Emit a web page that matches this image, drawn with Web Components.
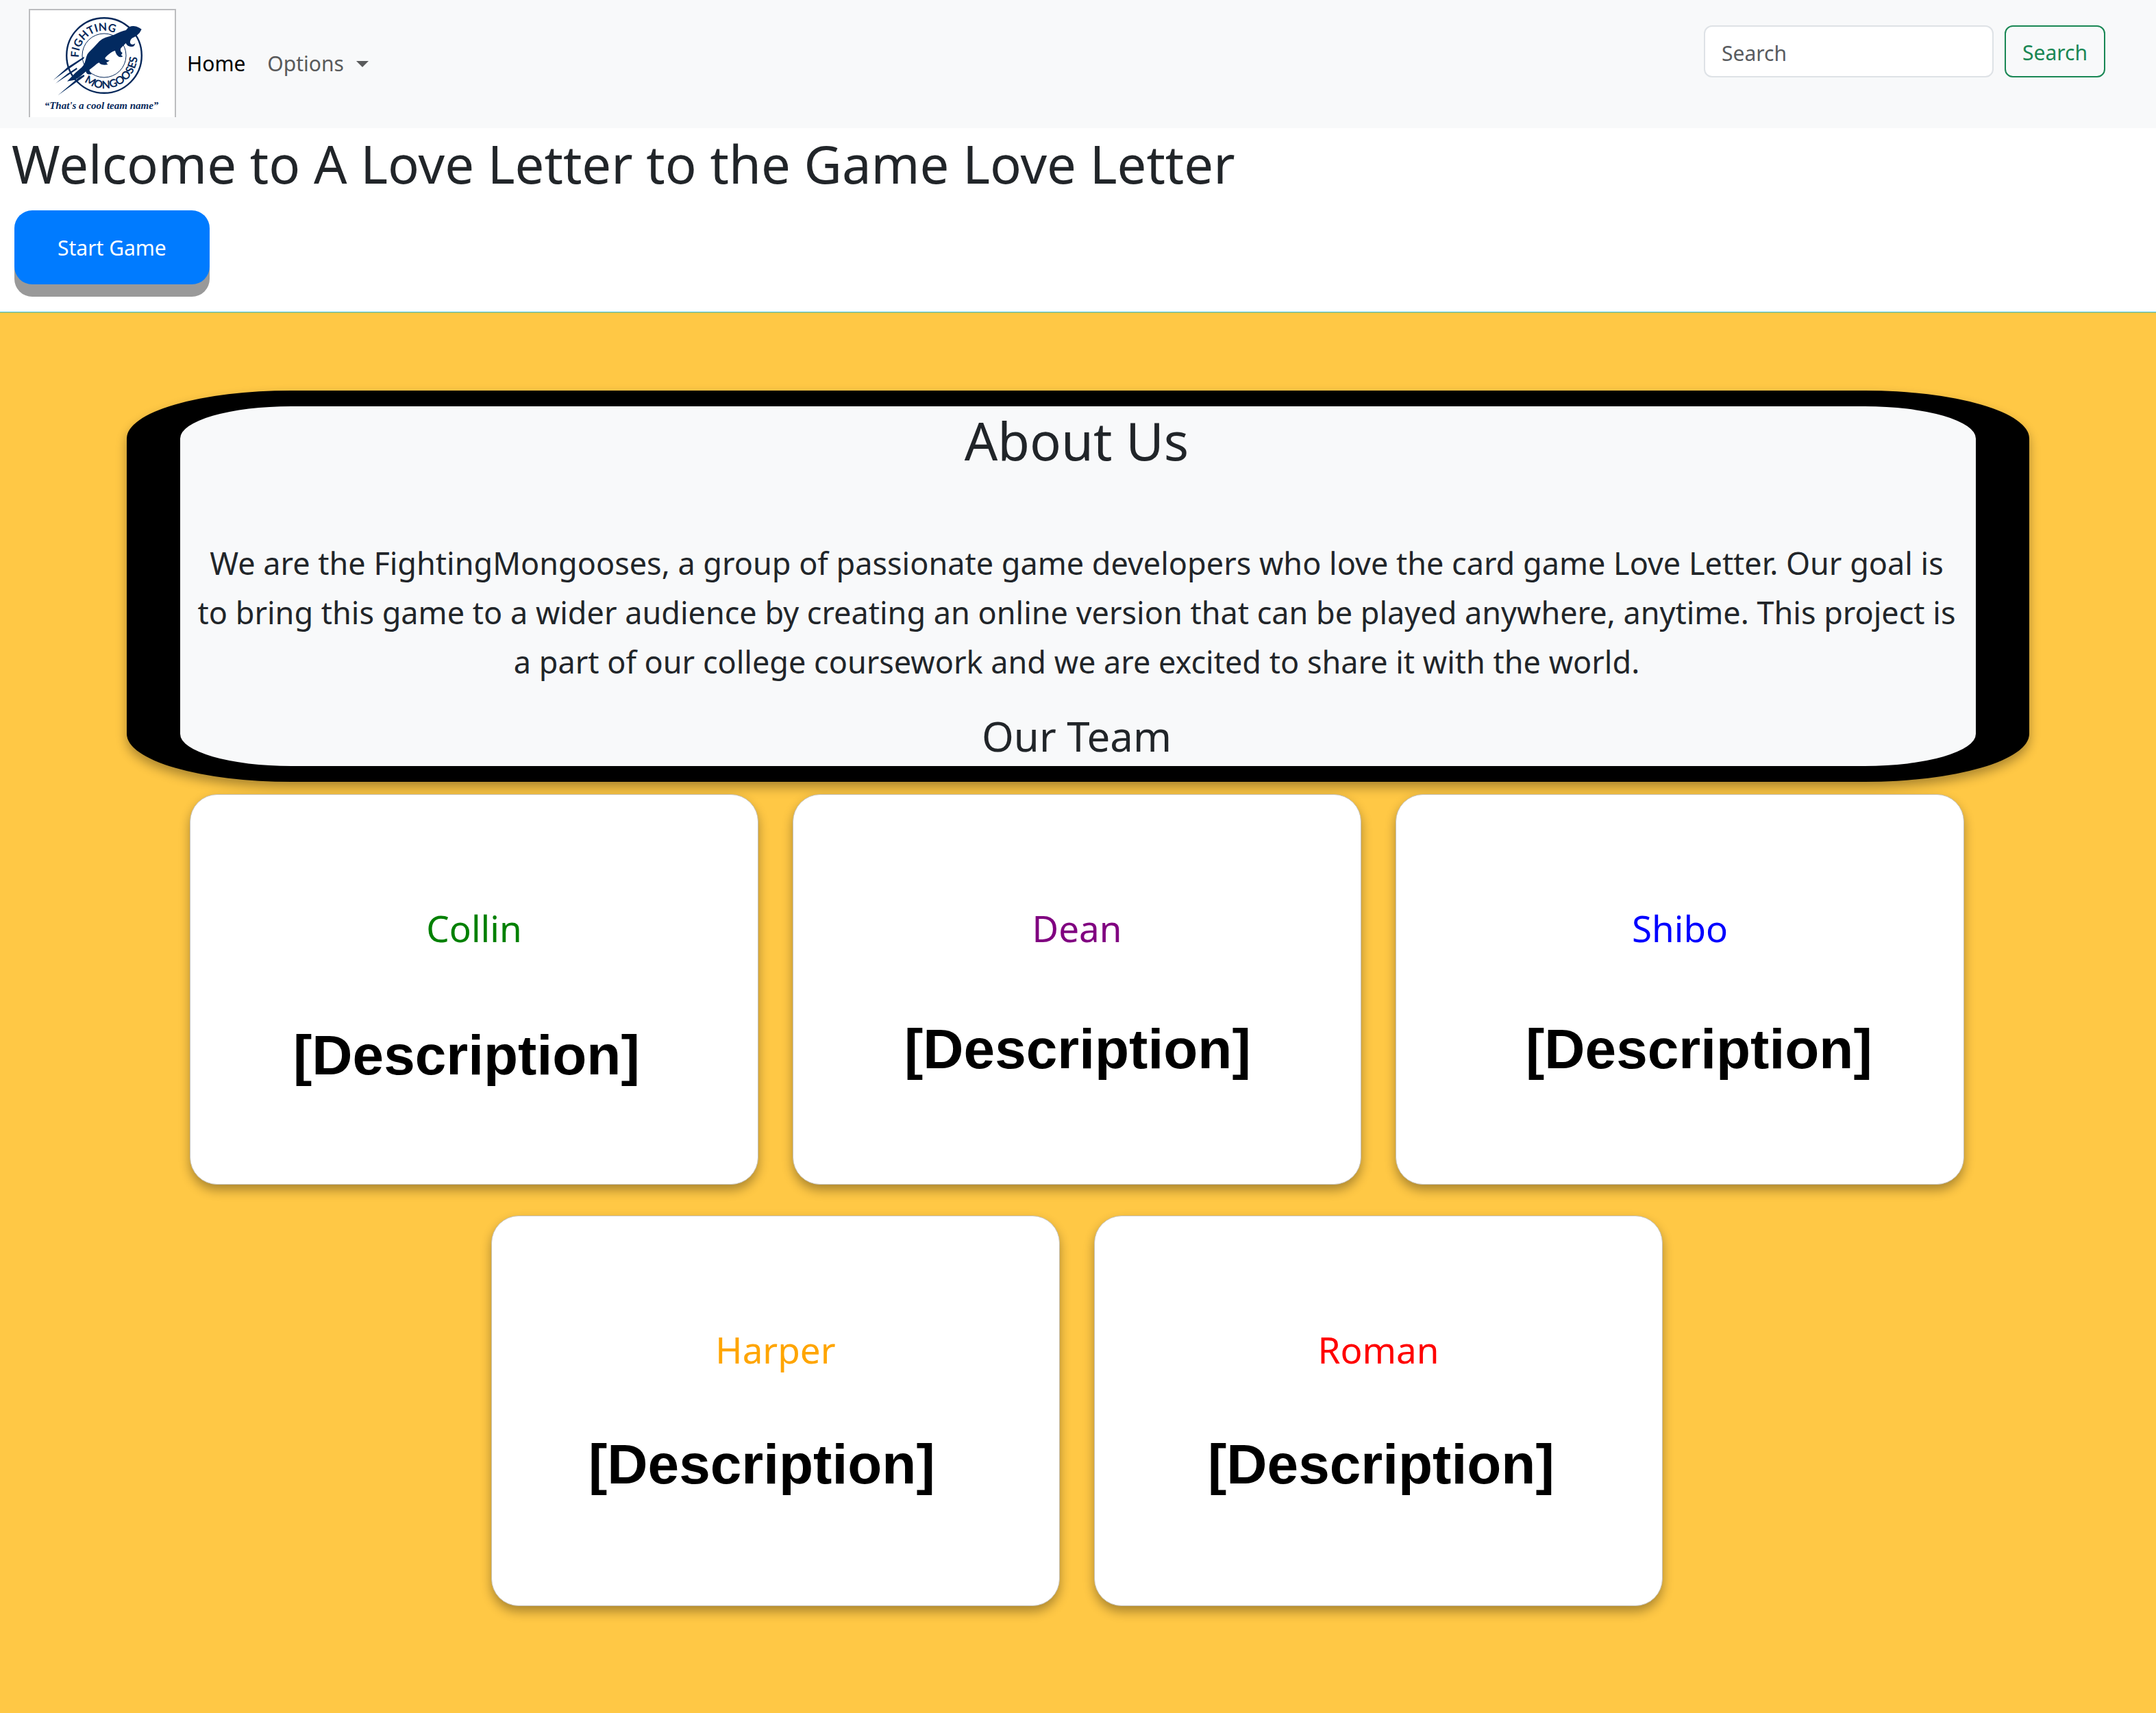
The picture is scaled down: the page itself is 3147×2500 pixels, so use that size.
<!DOCTYPE html>
<html lang="en">
<head>
<meta charset="utf-8">
<title>A Love Letter to the Game Love Letter</title>
<style>
  body {
    margin: 0;
    min-height: 100vh;
    background: #ffc845;
    color: #212529;
    font: 30px/48px "Noto Sans", "Open Sans", sans-serif;
  }
</style>
</head>
<body>
<site-header>
  <team-logo slot="brand"></team-logo>
  <nav-item slot="nav" href="#home" active>Home</nav-item>
  <nav-item slot="nav" menu>Options</nav-item>
  <search-form slot="tools"></search-form>
</site-header>

<main>
  <welcome-hero>
    <span slot="title">Welcome to A Love Letter to the Game Love Letter</span>
    <span slot="action">Start Game</span>
  </welcome-hero>

  <about-panel>
    <span slot="title">About Us</span>
    <span slot="text">We are the FightingMongooses, a group of passionate game developers who love the card game Love Letter. Our goal is to bring this game to a wider audience by creating an online version that can be played anywhere, anytime. This project is a part of our college coursework and we are excited to share it with the world.</span>
    <span slot="subtitle">Our Team</span>
  </about-panel>

  <team-grid>
    <member-card name="Collin" style="--name-color: green; --note-gap: 104px; --note-start: 150px">[Description]</member-card>
    <member-card name="Dean" style="--name-color: purple; --note-gap: 95px; --note-start: 162px">[Description]</member-card>
    <member-card name="Shibo" style="--name-color: blue; --note-gap: 95px; --note-start: 189px">[Description]</member-card>
    <member-card name="Harper" style="--name-color: orange; --note-gap: 86px; --note-start: 141px">[Description]</member-card>
    <member-card name="Roman" style="--name-color: red; --note-gap: 86px; --note-start: 165px">[Description]</member-card>
  </team-grid>
</main>

<script>
const define = (tag, render) => customElements.define(tag, class extends HTMLElement {
  connectedCallback() {
    if (this.shadowRoot) return;
    this.attachShadow({ mode: "open" }).innerHTML = render(this);
  }
});

define("site-header", () => `
  <style>
    :host { display: block; background: #f8f9fa; }
    header { display: flex; align-items: center; padding: 13px 74px 16px 42px; }
    nav { display: flex; flex: 1; }
  </style>
  <header>
    <slot name="brand"></slot>
    <nav aria-label="Main"><slot name="nav"></slot></nav>
    <slot name="tools"></slot>
  </header>`);

define("team-logo", () => `
  <style>
    :host { display: block; }
    a, svg { display: block; }
    text { fill: #06285a; font-family: Lato, sans-serif; font-weight: 700; }
    .tagline { font: italic 700 15px "Liberation Serif", serif; }
  </style>
  <a href="#home" aria-label="Fighting Mongooses">
    <svg width="215" height="158" viewBox="0 0 215 158">
      <rect width="215" height="158" fill="#fff"/>
      <path d="M1 158V1H214V158" fill="none" stroke="#bcbdbf" stroke-width="2"/>
      <defs>
        <path id="upper" d="M73 71A37 37 0 0 1 147 67"/>
        <path id="lower" d="M81 106A48 48 0 0 0 152 44"/>
      </defs>
      <g fill="none" stroke="#06285a">
        <circle cx="110" cy="68" r="54.8" stroke-width="2.4"/>
        <circle cx="110" cy="68" r="32" stroke-width="1"/>
      </g>
      <text font-size="16"><textPath href="#upper">FIGHTING</textPath></text>
      <text font-size="16"><textPath href="#lower">MONGOOSES</textPath></text>
      <g transform="translate(-12 -8) scale(.33333)" fill="#022a60">
        <path d="M530 113Q520 105 508 101Q490 97 478 102Q468 106 462 117Q440 122 408 138Q390 144 372 149Q355 155 345 166L320 193L300 213Q291 222 289 232L281 260Q276 272 268 280L240 304L204 341L236 335Q252 328 266 316L286 298Q287 306 292 308Q302 313 312 309L305 300L301 291L325 272Q334 263 344 259Q347 265 354 267Q368 271 383 267Q377 264 376 259Q384 256 390 250Q383 250 377 247Q370 244 370 239Q374 231 396 215Q405 209 414 207Q416 218 422 226Q430 236 440 235Q445 235 448 231Q443 230 440 226Q445 222 446 216Q439 213 438 207Q436 200 440 195L461 174Q464 181 470 185Q482 192 494 188Q501 184 502 175Q496 180 490 180Q484 179 482 176Q478 171 480 166Q482 157 488 152L506 143L521 129Z"/>
        <path d="M278 233L206 279L143 336L210 287L278 241Z"/>
        <path d="M246 281L205 308L153 350L206 316L248 288Z"/>
        <path d="M278 312L256 323L164 402L262 332L280 319Z"/>
      </g>
      <text class="tagline" x="106" y="146" text-anchor="middle">“That's a cool team name”</text>
    </svg>
  </a>`);

define("nav-item", el => `
  <style>
    :host { display: block; }
    a, button {
      display: flex; align-items: center; gap: 18px; padding: 18px 16px 16px;
      border: 0; background: none; font: inherit; text-decoration: none;
      color: ${el.hasAttribute("active") ? "#000" : "#595a5b"}; cursor: pointer;
    }
    .caret { border: 9px solid transparent; border-top-color: currentColor; border-bottom: 0; }
  </style>
  ${el.hasAttribute("menu")
    ? `<button type="button" aria-haspopup="true"><slot></slot><span class="caret"></span></button>`
    : `<a href="${el.getAttribute("href")}" aria-current="page"><slot></slot></a>`}`);

define("search-form", () => `
  <style>
    :host { display: block; align-self: flex-start; padding-top: 24px; }
    form { display: flex; gap: 16px; }
    input, button {
      box-sizing: border-box; height: 76px; padding: 14px 24px 10px;
      border: 2px solid #dee2e6; border-radius: 12px; font: inherit;
    }
    input { width: 423px; background: #fff; color: #212529; }
    input::placeholder { color: #595c5f; opacity: 1; }
    button { border-color: #198754; background: none; color: #198754; cursor: pointer; }
  </style>
  <form role="search">
    <input type="search" placeholder="Search" aria-label="Search">
    <button type="submit">Search</button>
  </form>`);

define("welcome-hero", () => `
  <style>
    :host { display: block; background: #fff; border-bottom: 1px solid #22b8cf; padding: 4px 17px 40px; }
    h1 { margin: 0 0 20px; font-size: 76px; line-height: 96px; font-weight: 400; }
    button {
      display: block; margin-left: 4px; padding: 31px 63px 29px;
      border: 0; border-radius: 26px; background: #007bff; color: #fff;
      font: inherit; box-shadow: 0 18px #999; cursor: pointer;
    }
  </style>
  <h1><slot name="title"></slot></h1>
  <button type="button"><slot name="action"></slot></button>`);

define("about-panel", () => `
  <style>
    :host { display: block; padding: 114px 185px 18px; }
    section {
      padding: 2px 26px 5px 22px; text-align: center;
      border: solid #000; border-width: 23px 78px; border-radius: 240px / 70px;
      background: #f8f9fa; box-shadow: 0 8px 16px rgba(0, 0, 0, .33);
    }
    h2, h3, p { margin: 0; font-weight: 400; }
    h2 { font-size: 76px; line-height: 96px; }
    p { padding: 95px 0 34px; font-size: 45px; line-height: 72px; }
    h3 { font-size: 60px; line-height: 77px; }
  </style>
  <section>
    <h2><slot name="title"></slot></h2>
    <p><slot name="text"></slot></p>
    <h3><slot name="subtitle"></slot></h3>
  </section>`);

define("team-grid", () => `
  <style>
    :host {
      display: flex; flex-wrap: wrap; justify-content: center;
      gap: 45px 50px; padding: 0 187px 156px 184px;
    }
  </style>
  <slot></slot>`);

define("member-card", el => `
  <style>
    :host {
      display: block; box-sizing: border-box; width: 830px; min-height: 570px;
      padding-top: 161px; border: 1px solid #c4c0b6; border-radius: 40px;
      background: #fff; box-shadow: 0 8px 16px rgba(0, 0, 0, .33);
    }
    h4 { margin: 0; text-align: center; font-size: 53px; line-height: 67px; font-weight: 400; color: var(--name-color); }
    p {
      margin: var(--note-gap) 0 0 var(--note-start); color: #000;
      font: 700 82px/96px "Liberation Sans", Arial, sans-serif;
    }
  </style>
  <h4>${el.getAttribute("name")}</h4>
  <p><slot></slot></p>`);
</script>
</body>
</html>
